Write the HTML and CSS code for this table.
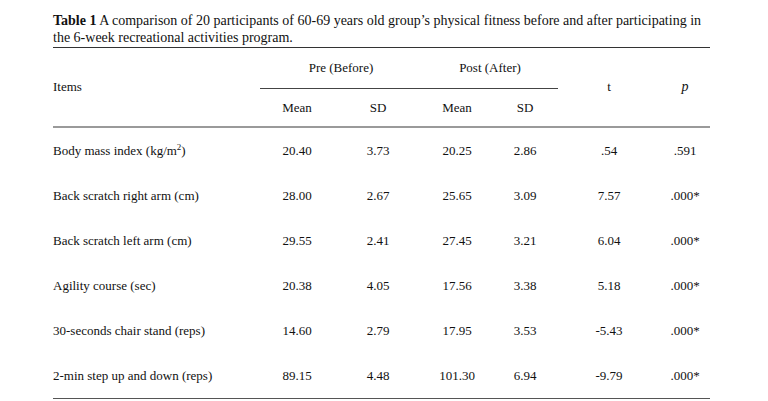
FILE: index.html
```html
<!DOCTYPE html>
<html>
<head>
<meta charset="utf-8">
<link rel="stylesheet" href="styles.css">
</head>
<body>
<div class="page">
  <p class="caption"><b>Table 1</b> A comparison of 20 participants of 60-69 years old group’s physical fitness before and after participating in the 6-week recreational activities program.</p>
  <div class="head">
    <div class="h-items">Items</div>
    <div class="h-group g-pre">Pre (Before)</div>
    <div class="h-group g-post">Post (After)</div>
    <div class="h-t">t</div>
    <div class="h-p"><i>p</i></div>
    <div class="h-sub c2">Mean</div>
    <div class="h-sub c3">SD</div>
    <div class="h-sub c4">Mean</div>
    <div class="h-sub c5">SD</div>
  </div>
  <div class="body">
    <div class="row"><div class="lab">Body mass index (kg/m<sup>2</sup>)</div><div>20.40</div><div>3.73</div><div>20.25</div><div>2.86</div><div>.54</div><div>.591</div></div>
    <div class="row"><div class="lab">Back scratch right arm (cm)</div><div>28.00</div><div>2.67</div><div>25.65</div><div>3.09</div><div>7.57</div><div>.000*</div></div>
    <div class="row"><div class="lab">Back scratch left arm (cm)</div><div>29.55</div><div>2.41</div><div>27.45</div><div>3.21</div><div>6.04</div><div>.000*</div></div>
    <div class="row"><div class="lab">Agility course (sec)</div><div>20.38</div><div>4.05</div><div>17.56</div><div>3.38</div><div>5.18</div><div>.000*</div></div>
    <div class="row"><div class="lab">30-seconds chair stand (reps)</div><div>14.60</div><div>2.79</div><div>17.95</div><div>3.53</div><div>-5.43</div><div>.000*</div></div>
    <div class="row"><div class="lab">2-min step up and down (reps)</div><div>89.15</div><div>4.48</div><div>101.30</div><div>6.94</div><div>-9.79</div><div>.000*</div></div>
  </div>
</div>
</body>
</html>
```

FILE: styles.css
```css
html, body {
  margin: 0;
  padding: 0;
  background: #ffffff;
}
body {
  font-family: "Liberation Serif", "Times New Roman", serif;
  color: #111111;
}
.page {
  width: 657px;
  margin-left: 53px;
  padding-top: 12px;
}
.caption {
  margin: 0;
  font-size: 14px;
  line-height: 17px;
  padding-bottom: 1px;
  border-bottom: 1px solid #333333;
}
.caption b {
  font-weight: bold;
}
.head, .row {
  display: grid;
  grid-template-columns: 207px 74px 88px 70px 66px 102px 50px;
}
.head {
  grid-template-rows: 41px 37px;
  font-size: 13px;
  border-bottom: 2px solid #9a9a9a;
}
.h-items {
  grid-column: 1;
  grid-row: 1 / 3;
  align-self: center;
}
.h-group {
  grid-row: 1;
  text-align: center;
  align-self: stretch;
  display: flex;
  align-items: center;
  justify-content: center;
  border-bottom: 1px solid #444444;
}
.g-pre {
  grid-column: 2 / 4;
}
.g-post {
  grid-column: 4 / 6;
}
.h-t {
  grid-column: 6;
  grid-row: 1 / 3;
  align-self: center;
  text-align: center;
}
.h-p {
  grid-column: 7;
  grid-row: 1 / 3;
  align-self: center;
  text-align: center;
  font-size: 14px;
}
.h-sub {
  grid-row: 2;
  align-self: center;
  text-align: center;
}
.c2 { grid-column: 2; }
.c3 { grid-column: 3; }
.c4 { grid-column: 4; }
.c5 { grid-column: 5; }
.body {
  border-bottom: 1px solid #555555;
  font-size: 13px;
}
.row {
  height: 45px;
  align-items: center;
  text-align: center;
}
.row .lab {
  text-align: left;
}
sup {
  font-size: 9px;
  line-height: 0;
  vertical-align: 5px;
}
```
